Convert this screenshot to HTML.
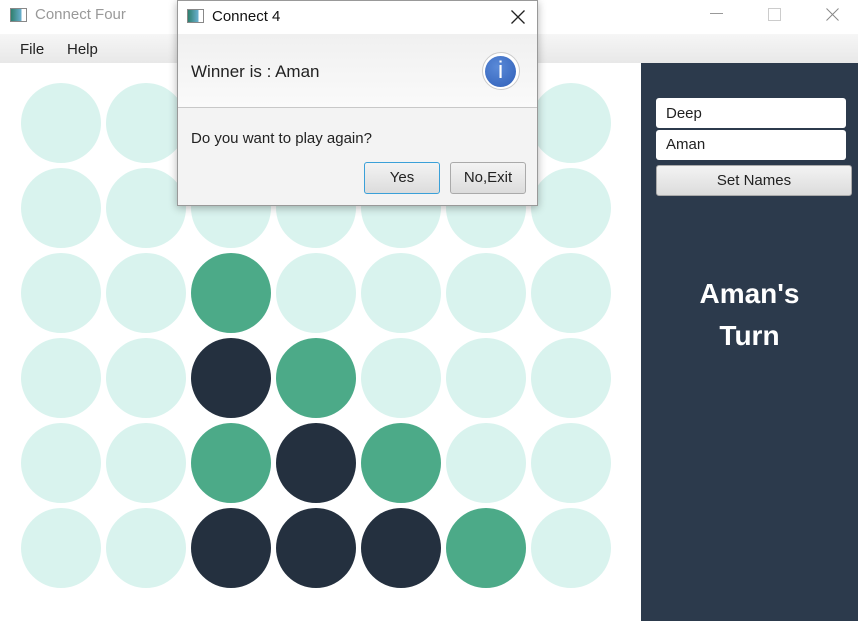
<!DOCTYPE html><html><head><style>
body{margin:0;width:858px;height:621px;position:relative;overflow:hidden;background:#fff;font-family:"Liberation Sans",sans-serif}
.a{position:absolute}
.c{position:absolute;width:80px;height:80px;border-radius:50%;background:#d9f3ee}
.g{background:#4caa88}.d{background:#24303f}
.ic{position:absolute;width:15px;height:12px;border:1px solid #888;background:linear-gradient(90deg,#2f7f6e,#6ab0d0 70%,#fff 70%)}
</style></head><body>
<div class="a" style="left:0;top:0;width:858px;height:34px;background:#fff"></div>
<div class="ic" style="left:10px;top:8px"></div>
<div class="a" style="left:35px;top:6px;font-size:15px;color:#999">Connect Four</div>
<div class="a" style="left:710px;top:13px;width:13px;border-top:1px solid #999"></div>
<div class="a" style="left:768px;top:8px;width:11px;height:11px;border:1px solid #ccc"></div>
<svg class="a" style="left:826px;top:8px" width="13" height="13"><path d="M0.5 0.5L12.5 12.5M12.5 0.5L0.5 12.5" stroke="#888" stroke-width="1"/></svg>
<div class="a" style="left:0;top:34px;width:858px;height:29px;background:linear-gradient(#f6f6f6,#e8e8e8)"></div>
<div class="a" style="left:20px;top:41px;font-size:15px;color:#222">File</div>
<div class="a" style="left:67px;top:41px;font-size:15px;color:#222">Help</div>
<div class="a" style="left:641px;top:63px;width:217px;height:558px;background:#2c3a4c"></div>
<div class="a" style="left:656px;top:98px;width:190px;height:30px;background:#fff;border-radius:3px;box-sizing:border-box;padding:7px 10px;font-size:15px;color:#222">Deep</div>
<div class="a" style="left:656px;top:130px;width:190px;height:30px;background:#fff;border-radius:3px;box-sizing:border-box;padding:6px 10px;font-size:15px;color:#222">Aman</div>
<div class="a" style="left:656px;top:165px;width:196px;height:31px;background:linear-gradient(#f3f3f3,#dcdcdc);border:1px solid #aaa;border-radius:3px;box-sizing:border-box;text-align:center;line-height:29px;font-size:15px;color:#222">Set Names</div>
<div class="a" style="left:641px;top:273px;width:217px;text-align:center;color:#fff;font-weight:bold;font-size:28px;line-height:42px">Aman's<br>Turn</div>
<div id="grid"></div>
<div class="a" style="left:177px;top:0;width:361px;height:206px;background:#f3f3f3;border:1px solid #999;box-sizing:border-box;box-shadow:0 2px 8px rgba(0,0,0,.3)">
<div class="a" style="left:0;top:0;width:359px;height:33px;background:#fff"></div>
<div class="ic" style="left:9px;top:8px"></div>
<div class="a" style="left:34px;top:7px;font-size:15px;color:#111">Connect 4</div>
<svg class="a" style="left:333px;top:9px" width="14" height="14"><path d="M0.5 0.5L13.5 13.5M13.5 0.5L0.5 13.5" stroke="#222" stroke-width="1.3"/></svg>
<div class="a" style="left:0;top:33px;width:359px;height:73px;background:linear-gradient(#f0f0f0,#fafafa);border-bottom:1px solid #c8c8c8"></div>
<div class="a" style="left:13px;top:61px;font-size:17px;color:#222">Winner is : Aman</div>
<div class="a" style="left:304px;top:51px;width:36px;height:36px;border-radius:50%;background:#fff;border:1px solid #ccc"></div>
<div class="a" style="left:307px;top:55px;width:31px;height:31px;border-radius:50%;background:radial-gradient(circle at 40% 35%,#5a8ad8,#2f5fb8);color:#fff;text-align:center;font-size:24px;line-height:30px">i</div>
<div class="a" style="left:13px;top:129px;font-size:15px;color:#222">Do you want to play again?</div>
<div class="a" style="left:186px;top:161px;width:76px;height:32px;border:1px solid #3aa0d8;border-radius:3px;background:linear-gradient(#f3f3f3,#dcdcdc);box-sizing:border-box;text-align:center;line-height:30px;font-size:15px;color:#222">Yes</div>
<div class="a" style="left:272px;top:161px;width:76px;height:32px;border:1px solid #aaa;border-radius:3px;background:linear-gradient(#f3f3f3,#dcdcdc);box-sizing:border-box;text-align:center;line-height:30px;font-size:15px;color:#222">No,Exit</div>
</div>
<script>
var m={"2,2":"g","3,2":"d","3,3":"g","4,2":"g","4,3":"d","4,4":"g","5,2":"d","5,3":"d","5,4":"d","5,5":"g"},h="";
for(var r=0;r<6;r++)for(var c=0;c<7;c++){h+='<div class="c '+(m[r+","+c]||"")+'" style="left:'+(21+85*c)+'px;top:'+(83+85*r)+'px"></div>';}
document.getElementById("grid").innerHTML=h;
</script>
</body></html>
